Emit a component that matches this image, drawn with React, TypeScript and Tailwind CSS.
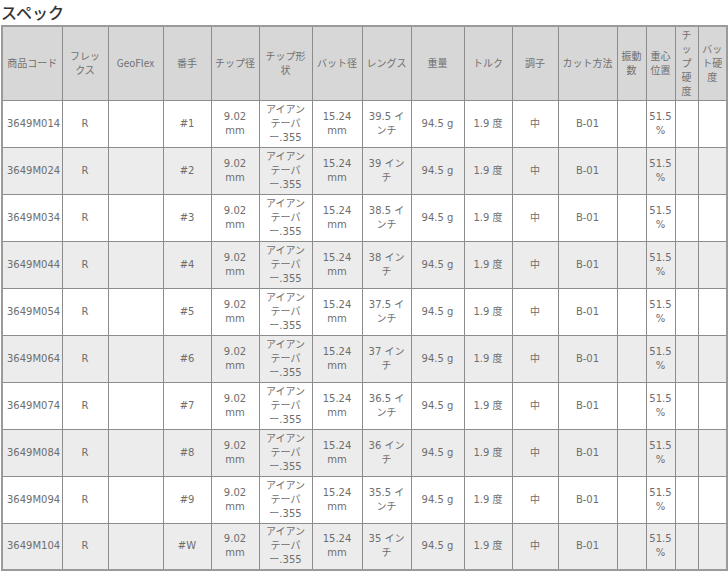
import React from 'react';

const widths = [60, 46, 55, 48, 48, 53, 50, 49, 53, 48, 46, 59, 29, 29, 23, 29];

// header labels, line breaks as in the page
const headers: React.ReactNode[] = [
  '商品コード',
  <>フレッ<br />クス</>,
  'GeoFlex',
  '番手',
  'チップ径',
  <>チップ形<br />状</>,
  'バット径',
  'レングス',
  '重量',
  'トルク',
  '調子',
  'カット方法',
  <>振動<br />数</>,
  <>重心<br />位置</>,
  <>チ<br />ッ<br />プ<br />硬<br />度</>,
  <>バッ<br />ト硬<br />度</>,
];

const lengths = ['39.5', '39', '38.5', '38', '37.5', '37', '36.5', '36', '35.5', '35'];
const numbers = ['1', '2', '3', '4', '5', '6', '7', '8', '9', 'W'];

function lengthCell(v: string) {
  // half sizes wrap after "イ", whole sizes after "イン"
  if (v.includes('.')) {
    return <>{v} イ<br />ンチ</>;
  }
  return <>{v} イン<br />チ</>;
}

const rows = numbers.map((n, i) => ({
  code: `3649M${String(i + 1).padStart(2, '0')}4`,
  cells: [
    'R',
    '',
    `#${n}`,
    <>9.02<br />mm</>,
    <>アイアン<br />テーパ<br />ー.355</>,
    <>15.24<br />mm</>,
    lengthCell(lengths[i]),
    '94.5 g',
    '1.9 度',
    '中',
    'B-01',
    '',
    <>51.5<br />%</>,
    '',
    '',
  ] as React.ReactNode[],
}));

export default function App() {
  return (
    <div
      className="w-[728px] h-[572px] overflow-hidden bg-white text-[#6e6e6e]"
      style={{ fontFamily: '"DejaVu Sans", "Noto Sans CJK JP", sans-serif' }}
    >
      <h2
        className="h-[25px] pt-[1px] pl-[1px] text-[16px] leading-[22px] font-medium text-[#333]"
        style={{ fontFamily: '"Noto Sans CJK JP", sans-serif' }}
      >
        スペック
      </h2>
      <table className="ml-[1px] w-[726px] table-fixed border-collapse border-2 border-[#9a9a9a] text-[10px] leading-[14px]">
        <colgroup>
          {widths.map((w, i) => (
            <col key={i} style={{ width: w }} />
          ))}
        </colgroup>
        <thead>
          <tr className="h-[74px] bg-[#d7d7d7]">
            {headers.map((h, i) => (
              <th
                key={i}
                className="border border-[#8c8c8c] px-[1px] text-center align-middle font-normal text-[#707070]"
                style={{ fontFamily: '"Noto Sans CJK JP", "DejaVu Sans", sans-serif' }}
              >
                {h}
              </th>
            ))}
          </tr>
        </thead>
        <tbody>
          {rows.map((r, i) => (
            <tr key={r.code} className={`h-[47px] ${i % 2 === 1 ? 'bg-[#ececec]' : 'bg-white'}`}>
              <td className="border border-[#8c8c8c] pl-[4px] text-left align-middle">{r.code}</td>
              {r.cells.map((c, j) => (
                <td key={j} className="border border-[#8c8c8c] px-[1px] text-center align-middle">
                  {c}
                </td>
              ))}
            </tr>
          ))}
        </tbody>
      </table>
    </div>
  );
}
